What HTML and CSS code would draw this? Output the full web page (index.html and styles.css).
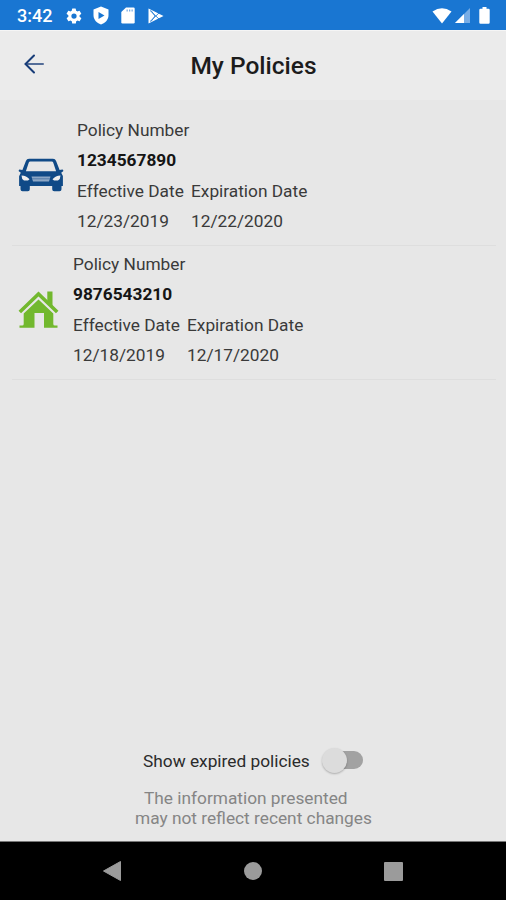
FILE: index.html
```html
<!DOCTYPE html>
<html lang="en">

<head>
  <meta charset="UTF-8">
  <meta name="viewport" content="width=device-width, initial-scale=1.0">
  <title>My Policies</title>
  <link rel="stylesheet" href="styles.css">
</head>

<body>

  <div class="status">
    <span class="time">3:42</span>
    <svg class="gear" width="18" height="18" viewBox="0 0 24 24" fill="#fff">
      <path d="M19.4 13a7.500 7.500 0 0 0 0-2l2.100-1.600a.5.5 0 0 0 .1-.6l-2-3.500a.5.5 0 0 0-.6-.2l-2.500 1a7.300 7.300 0 0 0-1.700-1l-.4-2.600a.5.5 0 0 0-.5-.4h-4a.5.5 0 0 0-.5.4L9 5.100a7.700 7.700 0 0 0-1.700 1l-2.500-1a.5.5 0 0 0-.6.2l-2 3.500a.5.5 0 0 0 .1.6L4.500 11a7.900 7.900 0 0 0 0 2l-2.100 1.600a.5.5 0 0 0-.1.6l2 3.500c.1.2.4.3.6.2l2.500-1c.5.4 1.100.7 1.700 1l.4 2.600c0 .2.2.4.5.4h4c.2 0 .5-.2.5-.4l.4-2.600a7.300 7.300 0 0 0 1.700-1l2.500 1c.2.1.5 0 .6-.2l2-3.500a.5.5 0 0 0-.1-.6zM12 15.500a3.500 3.500 0 1 1 0-7 3.500 3.500 0 0 1 0 7z" />
    </svg>
    <svg class="shield" width="16" height="19" viewBox="0 0 16 19">
      <path d="M8 .5 15.500 3.500V9c0 4.500-3 8-7.500 9.500C3.500 17 .5 13.500.5 9V3.500z" fill="#fff" />
      <path d="M5.500 6v7L11.500 9.500z" fill="#1976d2" />
    </svg>
    <svg class="card" width="14" height="17" viewBox="0 0 14 17">
      <path d="M5 .5h7.500q1.200 0 1.200 1.200v13.600q0 1.200-1.200 1.200h-11Q.3 16.500.3 15.300V5z" fill="#fff" />
      <path d="M5.500 2.500h1.300v2H5.500zM8 2.500h1.300v2H8zM10.500 2.500h1.300v2h-1.300z" fill="#7bade5" />
    </svg>
    <svg class="play" width="16" height="16" viewBox="0 0 16 16">
      <path d="M.5.5 15.500 8 .5 15.500z" fill="#fff" />
      <path d="M2 2.500 11 11M2 13.500 11 5M3 2.500 7 8 3 13.500" fill="none" stroke="#1976d2" stroke-width=".8" />
    </svg>
    <div class="signals">
      <svg width="20" height="16" viewBox="0 0 20 16">
        <path d="M.5 3.500Q10-3 19.500 3.500L10 15.500z" fill="#fff" />
      </svg>
      <svg class="cell" width="15" height="15" viewBox="0 0 15 15">
        <path d="M15 0v15H0z" fill="#78ade6" />
        <path d="M9 6v9H0z" fill="#fff" />
      </svg>
      <svg class="battery" width="11" height="17" viewBox="0 0 11 17">
        <path d="M3.500 0h4v1.800h2q1.200 0 1.200 1.200v12.500q0 1.200-1.200 1.200h-8Q.3 16.700.3 15.500V3q0-1.200 1.200-1.200h2z" fill="#fff" />
      </svg>
    </div>
  </div>

  <div class="header">
    <svg class="back" width="20" height="20" viewBox="0 0 20 20" fill="none" stroke-linecap="round">
      <path d="M2 10h17" stroke="#546d98" stroke-width="2" />
      <path d="M10 1.500 1.500 10l8.500 8.500" stroke="#173c78" stroke-width="2" />
    </svg>
    <h1>My Policies</h1>
  </div>

  <div class="list">
    <div class="policy">
      <svg class="car" width="46" height="34" viewBox="0 0 46 34">
        <path fill-rule="evenodd" fill="#104a87" d="M11 .8h24q2.300 0 3.100 2.200L41.600 12l2.800-.6q1.300.2.8 1.800l-2 1.600 1.700 3.200V28h-1.400v3.300q0 2-2 2h-5.300q-2 0-2-2V28H11.800v3.300q0 2-2 2H4.500q-2 0-2-2V28H1.100v-9.700l1.700-3.500-2-1.600q-.5-1.600.8-1.800l2.800.6L7.900 3Q8.700.8 11 .8zM12.200 3.500q-1 0-1.400 1.100L7.900 13.300h30.200l-2.900-8.700q-.4-1.100-1.400-1.100z" />
        <path d="M3.500 17.500q5 .3 8 3.700l-1.500 1.300H6q-2.500-1.500-2.500-5zM42.500 17.500q-5 .3-8 3.700l1.500 1.300h4q2.500-1.500 2.500-5z" fill="#eee" />
        <path d="M13.500 18.500h19l-1.500 5H15z" fill="#8ba6c5" />
        <path d="M14 20.800h18" stroke="#547da9" stroke-width="1" />
      </svg>
      <div class="details">
        <p>Policy Number</p>
        <p class="number">1234567890</p>
        <div class="dates">
          <p>Effective Date</p>
          <p>Expiration Date</p>
        </div>
        <div class="dates">
          <p>12/23/2019</p>
          <p>12/22/2020</p>
        </div>
      </div>
    </div>

    <div class="policy">
      <svg class="house" width="42" height="38" viewBox="0 0 42 38">
        <path d="M1.800 21 20.500 3 39.200 21" fill="none" stroke="#72b82e" stroke-width="3.600" />
        <path d="M29.300.5h5.200v15l-5.200-5z" fill="#72b82e" />
        <path d="M20.500 8.600 35.300 22.500V33q0 1.500 1.500 1.500h2.700v2.300H26V22h-9.500v14.800H1.500v-2.300H4.200q1.500 0 1.500-1.500V22.500z" fill="#72b82e" />
      </svg>
      <div class="details">
        <p>Policy Number</p>
        <p class="number">9876543210</p>
        <div class="dates">
          <p>Effective Date</p>
          <p>Expiration Date</p>
        </div>
        <div class="dates">
          <p>12/18/2019</p>
          <p>12/17/2020</p>
        </div>
      </div>
    </div>
  </div>

  <div class="footer">
    <div class="expired">
      <span>Show expired policies</span>
      <div class="switch"><div class="thumb"></div></div>
    </div>
    <p class="note first">The information presented</p>
    <p class="note">may not reflect recent changes</p>
  </div>

  <div class="navbar">
    <svg width="20" height="22" viewBox="0 0 20 22">
      <path d="M1.500 11 18.500 1.500v19z" fill="#9b9b9b" stroke="#9b9b9b" stroke-linejoin="round" />
    </svg>
    <div class="circle"></div>
    <div class="square"></div>
  </div>

</body>

</html>
```
FILE: styles.css
```css
* {
  margin: 0;
  padding: 0;
  box-sizing: border-box;
}

body {
  display: flex;
  flex-direction: column;
  height: 900px;
  background-color: #e7e7e7;
  color: #3a3a3a;
  font-family: Roboto, sans-serif;
  font-size: 17.3px;
  overflow: hidden;
}

svg {
  display: block;
  flex-shrink: 0;
}

.status {
  display: flex;
  align-items: center;
  height: 30px;
  padding: 1px 16px 0 17px;
  background-color: #1976d2;
  color: #fff;
}

.time {
  width: 48px;
  font-size: 18px;
  font-weight: 500;
}

.shield {
  margin-left: 10px;
}

.card {
  margin-left: 12px;
}

.play {
  margin-left: 13px;
}

.signals {
  display: flex;
  align-items: center;
  margin-left: auto;
}

.cell {
  margin-left: 3px;
}

.battery {
  margin-left: 9px;
}

.header {
  display: flex;
  align-items: center;
  height: 70px;
  padding: 0 24px;
  border-top: 1px solid #f5f5f5;
  background-color: #ebebeb;
}

.back {
  margin-bottom: 3px;
}

h1 {
  flex: 1;
  padding-right: 19px;
  color: #1c1c1c;
  font-size: 24.5px;
  font-weight: 500;
  text-align: center;
}

.list {
  flex: 1;
  padding: 12px 10px 0 12px;
}

.policy {
  display: flex;
  height: 134px;
  padding: 3px 0 0 6px;
  border-bottom: 1px solid #dedede;
}

.car {
  margin: 43px 13px 0 0;
}

.house {
  margin: 42px 13px 0 0;
}

.details p {
  width: 114px;
  line-height: 30.4px;
  white-space: nowrap;
}

.dates {
  display: flex;
}

.details .number {
  color: #151515;
  font-weight: 700;
}

.footer {
  height: 93px;
}

.expired {
  display: flex;
  align-items: center;
  height: 26px;
  margin-left: 143px;
  color: #2b2b2b;
}

.expired span {
  width: 180px;
  white-space: nowrap;
}

.switch {
  width: 40px;
  height: 18px;
  margin-top: -2px;
  border-radius: 9px;
  background: linear-gradient(to right, transparent 12px, #a2a2a2 12px);
}

.thumb {
  width: 25px;
  height: 25px;
  margin: -3px 0 0 -1px;
  border-radius: 50%;
  background-color: #dcdcdc;
  box-shadow: 0 1px 2px rgba(0, 0, 0, 0.25);
}

.note {
  margin-left: 135px;
  color: #858585;
  line-height: 20px;
  white-space: nowrap;
}

.first {
  margin: 14px 0 0 144px;
}

.navbar {
  display: flex;
  align-items: center;
  height: 59px;
  padding-left: 102px;
  border-top: 1px solid #777;
  background-color: #000;
}

.circle {
  width: 18px;
  height: 18px;
  margin-left: 122px;
  border-radius: 50%;
  background-color: #9b9b9b;
}

.square {
  width: 19px;
  height: 19px;
  margin-left: 122px;
  border-radius: 1px;
  background-color: #9b9b9b;
}
```
